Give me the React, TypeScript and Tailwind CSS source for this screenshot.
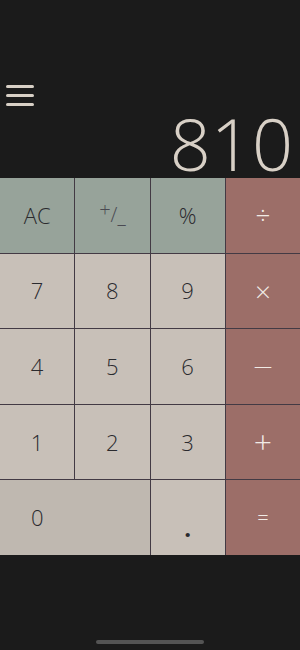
import React from "react";

type Key = { label: React.ReactNode; kind: "fn" | "num" | "op"; wide?: boolean };

const KEYS: Key[] = [
  { label: "AC", kind: "fn" },
  {
    label: (
      <span className="text-[20px] text-[#4a4a52]">
        <span className="relative -top-[5px]">+</span>/<span className="relative top-[1px]">_</span>
      </span>
    ),
    kind: "fn",
  },
  { label: "%", kind: "fn" },
  { label: <span className="text-[26px]">÷</span>, kind: "op" },
  { label: "7", kind: "num" },
  { label: "8", kind: "num" },
  { label: "9", kind: "num" },
  { label: <span className="text-[28px]">×</span>, kind: "op" },
  { label: "4", kind: "num" },
  { label: "5", kind: "num" },
  { label: "6", kind: "num" },
  { label: <span className="text-[18px]">—</span>, kind: "op" },
  { label: "1", kind: "num" },
  { label: "2", kind: "num" },
  { label: "3", kind: "num" },
  { label: <span className="text-[32px]">+</span>, kind: "op" },
  { label: "0", kind: "num", wide: true },
  { label: <span className="relative top-[10px] text-[24px] font-bold">.</span>, kind: "num" },
  { label: <span className="text-[20px]">=</span>, kind: "op" },
];

function keyClass(k: Key) {
  if (k.kind === "fn") return "bg-[#97a39a] text-[#2a2a2e]";
  if (k.kind === "op") return "bg-[#9c6e68] text-[#f1ebe6]";
  if (k.wide) return "bg-[#bfb8b0] text-[#2a2a2e] col-span-2 justify-start pl-[31px]";
  return "bg-[#c8c0b8] text-[#2a2a2e]";
}

export default function App() {
  return (
    <div
      className="flex h-[650px] w-[300px] flex-col bg-[#1b1b1b]"
      style={{ fontFamily: '"Open Sans", "Noto Sans", sans-serif' }}
    >
      <div className="flex h-[178px] flex-col px-[6px] pt-[85px]">
        <button className="flex w-[28px] flex-col gap-[6.5px]" aria-label="Menu">
          <span className="h-[2.5px] w-full rounded-full bg-[#d8d0c6]" />
          <span className="h-[2.5px] w-full rounded-full bg-[#d8d0c6]" />
          <span className="h-[2.5px] w-full rounded-full bg-[#d8d0c6]" />
        </button>
        <div className="-mt-[3px] pr-[1px] text-right text-[72px] font-light leading-[80px] text-[#d8d0c6]">
          810
        </div>
      </div>

      <div className="grid h-[377px] grid-cols-4 grid-rows-5 gap-px bg-[#433a44]">
        {KEYS.map((k, i) => (
          <button
            key={i}
            className={
              "flex items-center justify-center text-[22px] font-light " + keyClass(k)
            }
          >
            {k.label}
          </button>
        ))}
      </div>

      <div className="flex flex-1 items-end justify-center pb-[6px]">
        <div className="h-[4px] w-[108px] rounded-full bg-[#545454]" />
      </div>
    </div>
  );
}
